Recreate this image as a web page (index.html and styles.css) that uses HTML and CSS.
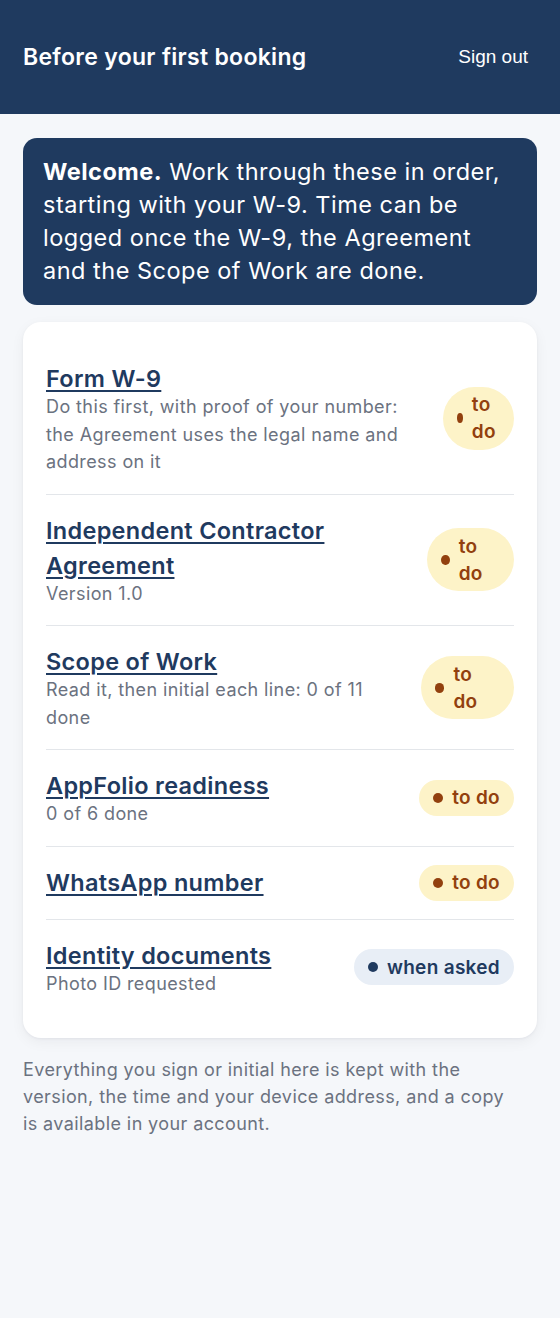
FILE: index.html
```html
<!DOCTYPE html>
<html lang="en">
<head>
<meta charset="utf-8">
<title>Before your first booking</title>
<link rel="stylesheet" href="styles.css">
</head>
<body>
<header class="topbar">
  <h1 class="topbar__title">Before your first booking</h1>
  <button class="topbar__signout" type="button">Sign out</button>
</header>
<main class="page">
  <section class="welcome">
    <p><strong>Welcome.</strong> Work through these in order, starting with your W-9. Time can be logged once the W-9, the Agreement and the Scope of Work are done.</p>
  </section>
  <section class="card">
    <ul class="steps">
      <li class="step">
        <div class="step__text">
          <a class="step__title" href="#">Form W-9</a>
          <p class="step__sub">Do this first, with proof of your number: the Agreement uses the legal name and address on it</p>
        </div>
        <span class="badge badge--todo"><span class="badge__dot"></span><span class="badge__label">to do</span></span>
      </li>
      <li class="step">
        <div class="step__text">
          <a class="step__title" href="#">Independent Contractor Agreement</a>
          <p class="step__sub">Version 1.0</p>
        </div>
        <span class="badge badge--todo"><span class="badge__dot"></span><span class="badge__label">to do</span></span>
      </li>
      <li class="step">
        <div class="step__text">
          <a class="step__title" href="#">Scope of Work</a>
          <p class="step__sub">Read it, then initial each line: 0 of 11 done</p>
        </div>
        <span class="badge badge--todo"><span class="badge__dot"></span><span class="badge__label">to do</span></span>
      </li>
      <li class="step">
        <div class="step__text">
          <a class="step__title" href="#">AppFolio readiness</a>
          <p class="step__sub">0 of 6 done</p>
        </div>
        <span class="badge badge--todo"><span class="badge__dot"></span><span class="badge__label">to do</span></span>
      </li>
      <li class="step">
        <div class="step__text">
          <a class="step__title" href="#">WhatsApp number</a>
        </div>
        <span class="badge badge--todo"><span class="badge__dot"></span><span class="badge__label">to do</span></span>
      </li>
      <li class="step">
        <div class="step__text">
          <a class="step__title" href="#">Identity documents</a>
          <p class="step__sub">Photo ID requested</p>
        </div>
        <span class="badge badge--asked"><span class="badge__dot"></span><span class="badge__label">when asked</span></span>
      </li>
    </ul>
  </section>
  <p class="footnote">Everything you sign or initial here is kept with the version, the time and your device address, and a copy is available in your account.</p>
</main>
</body>
</html>
```
FILE: styles.css
```css
* { box-sizing: border-box; }

html, body {
  margin: 0;
  padding: 0;
}

body {
  background: #f5f7fa;
  font-family: "Inter", "Noto Sans", sans-serif;
  font-size: 18px;
  line-height: 1.5;
  color: #1f2937;
  min-height: 1318px;
}

.topbar {
  background: #1f3a5f;
  color: #ffffff;
  display: flex;
  align-items: center;
  justify-content: space-between;
  padding: 40px 24px 40px 23px;
}

.topbar__title {
  margin: 0;
  font-size: 23px;
  line-height: 34px;
  font-weight: 600;
  letter-spacing: 0.3px;
}

.topbar__signout {
  background: none;
  border: 0;
  color: #ffffff;
  font-family: "Liberation Sans", Arial, sans-serif;
  font-size: 19px;
  padding: 6px 8px;
  cursor: pointer;
}

.page {
  padding: 24px 23px;
  display: flex;
  flex-direction: column;
  gap: 17px;
}

.welcome {
  background: #1f3a5f;
  color: #ffffff;
  border-radius: 14px;
  padding: 17px 20px 18px;
}

.welcome p {
  margin: 0;
  font-size: 23.5px;
  line-height: 33px;
  letter-spacing: 0.5px;
}

.welcome strong { font-weight: 700; }

.card {
  background: #ffffff;
  border-radius: 18px;
  padding: 21px 23px 23px;
  box-shadow: 0 1px 3px rgba(15, 23, 42, 0.05), 0 4px 14px rgba(15, 23, 42, 0.05);
}

.steps {
  list-style: none;
  margin: 0;
  padding: 0;
}

.step {
  display: flex;
  align-items: center;
  gap: 16px;
  padding: 18px 0;
  border-top: 1px solid #e3e6ea;
}

.step:first-child { border-top: 0; }

.step__text {
  flex: 1 1 auto;
  min-width: 0;
}

.step__title {
  display: block;
  color: #1f3a5f;
  font-size: 23.5px;
  line-height: 35px;
  font-weight: 600;
  letter-spacing: 0.3px;
  text-decoration: underline;
  text-decoration-thickness: 2px;
  text-underline-offset: 3px;
}

.step__sub {
  margin: -3px 0 0;
  color: #6b7280;
  font-size: 18px;
  line-height: 27.5px;
  letter-spacing: 0.4px;
}

.badge {
  display: flex;
  align-items: center;
  gap: 9px;
  padding: 4.5px 14px;
  border-radius: 999px;
  font-size: 19px;
  line-height: 27px;
  font-weight: 600;
  letter-spacing: 0.3px;
}

.badge__dot {
  width: 10px;
  height: 10px;
  border-radius: 50%;
  background: currentColor;
}

.badge--todo {
  background: #fdf3c8;
  color: #92400e;
}

.badge--asked {
  background: #e8eef6;
  color: #1f3a5f;
}

.footnote {
  margin: 1px 0 0;
  max-width: 500px;
  color: #6b7280;
  font-size: 18px;
  line-height: 27px;
  letter-spacing: 0.4px;
}
```
